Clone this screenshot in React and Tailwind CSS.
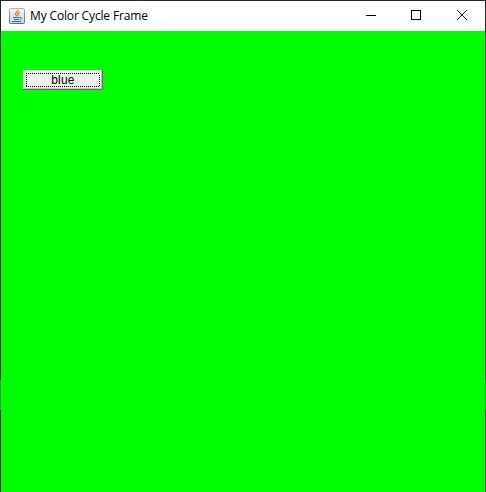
function JavaIcon() {
  return (
    <svg width="16" height="16" viewBox="0 0 16 16" fill="none">
      <defs>
        <linearGradient id="tile" x1="0" y1="0" x2="0" y2="1">
          <stop offset="0" stopColor="#f4f7f9" />
          <stop offset="1" stopColor="#c5d3dd" />
        </linearGradient>
        <linearGradient id="edge" x1="0" y1="0" x2="0" y2="1">
          <stop offset="0" stopColor="#a9b7c1" />
          <stop offset="1" stopColor="#54728a" />
        </linearGradient>
      </defs>
      <rect x="0.5" y="0.5" width="15" height="15" rx="1" fill="url(#tile)" stroke="url(#edge)" />
      <path d="M8.8 1.8c.8 1.9-2.7 2.600-2.400 4.200.1.9 1 1.300 1.300 2.200M10.800 4.300c-1.300.6-2.400 1.200-2 2.100.3.6.6.9.1 1.600" stroke="#e37a2b" strokeWidth="1.3" />
      <path d="M4 9.500h6.500M5 11.500h5M3 13.500h9M11 9.500c2.400-.5 2 1.600-.2 2" stroke="#426d8b" strokeWidth="1" />
    </svg>
  );
}

function TitleBar() {
  return (
    <header className="flex h-[30px] shrink-0 items-center bg-white pl-2">
      <JavaIcon />
      <h1 className="ml-[5px] whitespace-nowrap font-['Open_Sans','Noto_Sans',sans-serif] text-[12px] leading-4 tracking-[-0.15px] text-black">
        My Color Cycle Frame
      </h1>
      <div className="ml-auto flex h-full">
        <button aria-label="Minimize" className="h-full w-[45px]">
          <svg width="45" height="30" shapeRendering="crispEdges">
            <path d="M18 14.5h10" stroke="#000" />
          </svg>
        </button>
        <button aria-label="Maximize" className="h-full w-[46px]">
          <svg width="46" height="30" shapeRendering="crispEdges">
            <path d="M18.5 9.5h9v9h-9z" stroke="#000" fill="none" />
          </svg>
        </button>
        <button aria-label="Close" className="h-full w-[46px]">
          <svg width="46" height="30">
            <path d="M18 9l10 10M28 9l-10 10" stroke="#000" strokeWidth="0.9" />
          </svg>
        </button>
      </div>
    </header>
  );
}

function SideBorder() {
  return (
    <div className="flex w-px shrink-0 flex-col bg-[#202820]">
      <div className="mt-[379px] h-[30px] bg-[#449044]" />
    </div>
  );
}

export default function App() {
  return (
    <div className="flex h-[492px] w-[486px] flex-col overflow-hidden">
      <div className="h-px shrink-0 bg-[#29272c]" />
      <div className="flex min-h-0 flex-1">
        <SideBorder />
        <div className="flex min-w-0 flex-1 flex-col">
          <TitleBar />
          <main className="flex-1 bg-[#00ff00] pl-[22px] pt-[39px]">
            <button className="flex h-5 w-20 bg-[#f0f0f0] p-[3px] shadow-[inset_-1px_-1px_0_#696969,inset_1px_1px_0_#f4fff4,inset_-2px_-2px_0_#c4c4c4]">
              <span className="flex h-[14px] w-[74px] bg-[repeating-linear-gradient(90deg,#000_0_1px,#f0f0f0_1px_2px)] py-px">
                <span className="flex flex-1 bg-[repeating-linear-gradient(180deg,#f0f0f0_0_1px,#000_1px_2px)] px-px">
                  <span className="flex flex-1 items-center justify-center bg-[#f0f0f0] font-['Liberation_Sans',Arial,sans-serif] text-[12px] leading-3 tracking-[0.2px] text-black">
                    blue
                  </span>
                </span>
              </span>
            </button>
          </main>
        </div>
        <SideBorder />
      </div>
    </div>
  );
}
